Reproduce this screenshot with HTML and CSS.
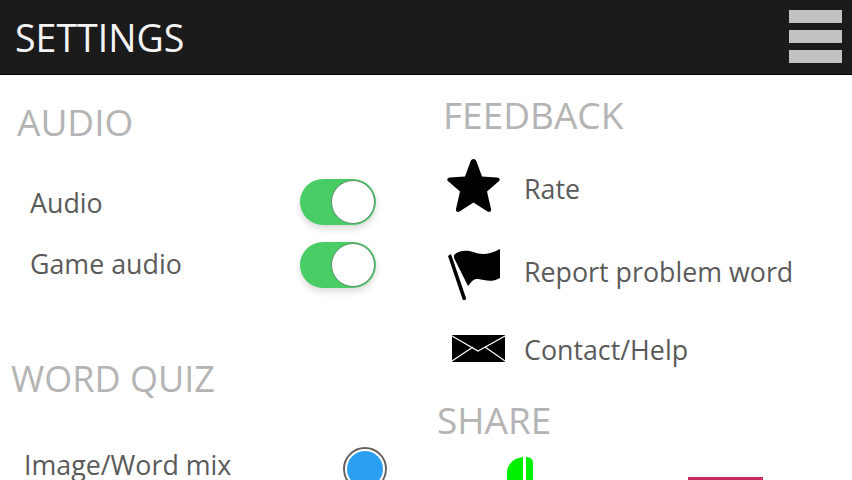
FILE: index.html
```html
<!DOCTYPE html>
<html lang="en">
<head>
    <meta charset="UTF-8">
    <meta name="viewport" content="width=device-width, initial-scale=1.0">
    <title>Settings</title>
    <link rel="stylesheet" href="styles.css">
</head>
<body>
    <header class="topbar">
        <h1>SETTINGS</h1>
        <div class="menu-btn">
            <span></span>
            <span></span>
            <span></span>
        </div>
    </header>

    <main class="columns">
        <section class="left">
            <h2 class="audio-title">AUDIO</h2>
            <div class="option audio-first">
                <span>Audio</span>
                <div class="toggle"><div class="knob"></div></div>
            </div>
            <div class="option audio-second">
                <span>Game audio</span>
                <div class="toggle"><div class="knob"></div></div>
            </div>

            <h2 class="quiz-title">WORD QUIZ</h2>
            <div class="option quiz-first">
                <span>Image/Word mix</span>
                <div class="radio"><div class="dot"></div></div>
            </div>
        </section>

        <section class="right">
            <h2 class="feedback-title">FEEDBACK</h2>
            <div class="link-row rate-row">
                <div class="link-icon">
                    <svg class="star" width="56" height="56" viewBox="0 2 56 56">
                        <path d="M26.500 1 C28 1 29 2 29.500 3.500 L35 18.500 L50 19.500 C53 19.800 53.500 22 51.500 23.500 L40 33.500 L44 51 C44.500 53.500 42.500 54.500 40.500 53.500 L26.500 44.500 L12.500 53.500 C10.500 54.500 8.500 53.500 9 51 L13 33.500 L1.500 23.500 C-0.500 22 0 19.800 3 19.500 L18 18.500 L23.500 3.500 C24 2 25 1 26.500 1 Z" fill="#000"/>
                    </svg>
                </div>
                <span>Rate</span>
            </div>
            <div class="link-row report-row">
                <div class="link-icon">
                    <svg width="56" height="58" viewBox="2 -6 56 58">
                        <path d="M3 8 L6 6 L21 50 C21.500 52 18 53 17.500 51 Z" fill="#000"/>
                        <path d="M9 7 C14 2 22 2 28 4 C36 7 44 7 55 1 L55 30 C46 35 40 32 33 31 C29 30.500 27 33 23 38 L9 10 Z" fill="#000"/>
                    </svg>
                </div>
                <span>Report problem word</span>
            </div>
            <div class="link-row contact-row">
                <div class="link-icon">
                    <svg width="60" height="30" viewBox="-5 0 60 30">
                        <rect x="0" y="1" width="53" height="27" fill="#000"/>
                        <path d="M0 2 L26 17 L53 2 M0 27 L21 13 M53 27 L33 13" fill="none" stroke="#fff" stroke-width="1.200"/>
                    </svg>
                </div>
                <span>Contact/Help</span>
            </div>

            <h2 class="share-title">SHARE</h2>
            <div class="share-row">
                <svg class="share-green" width="27" height="30" viewBox="0 0 27 30">
                    <path d="M16 0 L16 30 L0 30 L0 16 C0 7 7 1 16 0 Z" fill="#00f000"/>
                    <path d="M19 0 C23 0 26 2 26 6 L26 30 L19 30 Z" fill="#00f000"/>
                </svg>
                <div class="share-pink"></div>
            </div>
        </section>
    </main>
</body>
</html>
```

FILE: styles.css
```css
body {
    margin: 0;
    height: 480px;
    overflow: hidden;
    background-color: #fff;
    font-family: "Open Sans", "Noto Sans", sans-serif;
}
h1, h2 {
    margin: 0;
    font-weight: 400;
}
.topbar {
    display: flex;
    justify-content: space-between;
    align-items: center;
    box-sizing: border-box;
    height: 75px;
    padding: 0 10px 0 15px;
    background-color: #1b1b1b;
    border-bottom: 1px solid #000;
}
.topbar h1 {
    color: #f4f4f4;
    font-size: 37.500px;
    line-height: 75px;
}
.menu-btn {
    display: flex;
    flex-direction: column;
    gap: 7px;
    margin-top: -1px;
}
.menu-btn span {
    display: block;
    width: 53px;
    height: 13px;
    background-color: #c2c2c2;
}
.columns {
    display: flex;
}
.left {
    width: 426px;
    flex: none;
}
.right {
    flex: 1;
}
h2 {
    color: #b4b4b4;
    font-size: 37px;
    line-height: 48px;
}
.audio-title {
    margin: 23px 0 0 17px;
}
.quiz-title {
    margin: 67px 0 0 11px;
    font-size: 36px;
}
.feedback-title {
    margin: 16px 0 0 17px;
}
.share-title {
    margin: 29px 0 0 11px;
}
.option {
    display: flex;
    align-items: center;
    justify-content: space-between;
    height: 48px;
    color: #5a5a5a;
    font-size: 26.800px;
}
.audio-first {
    margin: 32px 50px 0 30px;
}
.audio-second {
    margin: 14px 50px 0 30px;
}
.audio-second span {
    margin-bottom: 2px;
}
.audio-second .toggle {
    margin-top: 2px;
}
.quiz-first {
    align-items: flex-start;
    height: 39px;
    margin: 38px 39px 0 24px;
    line-height: 30px;
}
.quiz-first span {
    margin-top: 9px;
}
.quiz-first .radio {
    margin-top: 6px;
    flex: none;
}
.toggle {
    display: flex;
    justify-content: flex-end;
    align-items: center;
    box-sizing: border-box;
    width: 76px;
    height: 46px;
    padding-right: 1px;
    border-radius: 23px;
    background-color: #48cc64;
    box-shadow: 0 4px 7px rgba(0,0,0,0.14);
}
.knob {
    box-sizing: border-box;
    width: 44px;
    height: 44px;
    border-radius: 50%;
    background-color: #fff;
    border: 1.500px solid #5c8f6a;
}
.radio {
    display: flex;
    justify-content: center;
    align-items: center;
    box-sizing: border-box;
    width: 44px;
    height: 44px;
    border-radius: 50%;
    background-color: #fff;
    border: 2px solid #666260;
}
.dot {
    width: 36px;
    height: 36px;
    border-radius: 50%;
    background-color: #2b9ff0;
}
.link-row {
    display: flex;
    align-items: center;
    color: #5a5a5a;
    font-size: 26.800px;
}
.link-icon {
    display: flex;
    align-items: center;
    width: 77px;
    flex: none;
}
.star {
    overflow: visible;
}
.rate-row {
    height: 56px;
    margin: 21px 0 0 21px;
}
.report-row {
    height: 56px;
    margin: 27px 0 0 21px;
}
.contact-row {
    height: 36px;
    margin: 32px 0 0 21px;
}
.share-row {
    display: flex;
    align-items: flex-start;
    height: 60px;
    margin-top: 13px;
}
.share-green {
    margin-left: 81px;
    flex: none;
}
.share-pink {
    width: 75px;
    height: 40px;
    margin: 20px 0 0 154px;
    background-color: #c92a63;
}
```
